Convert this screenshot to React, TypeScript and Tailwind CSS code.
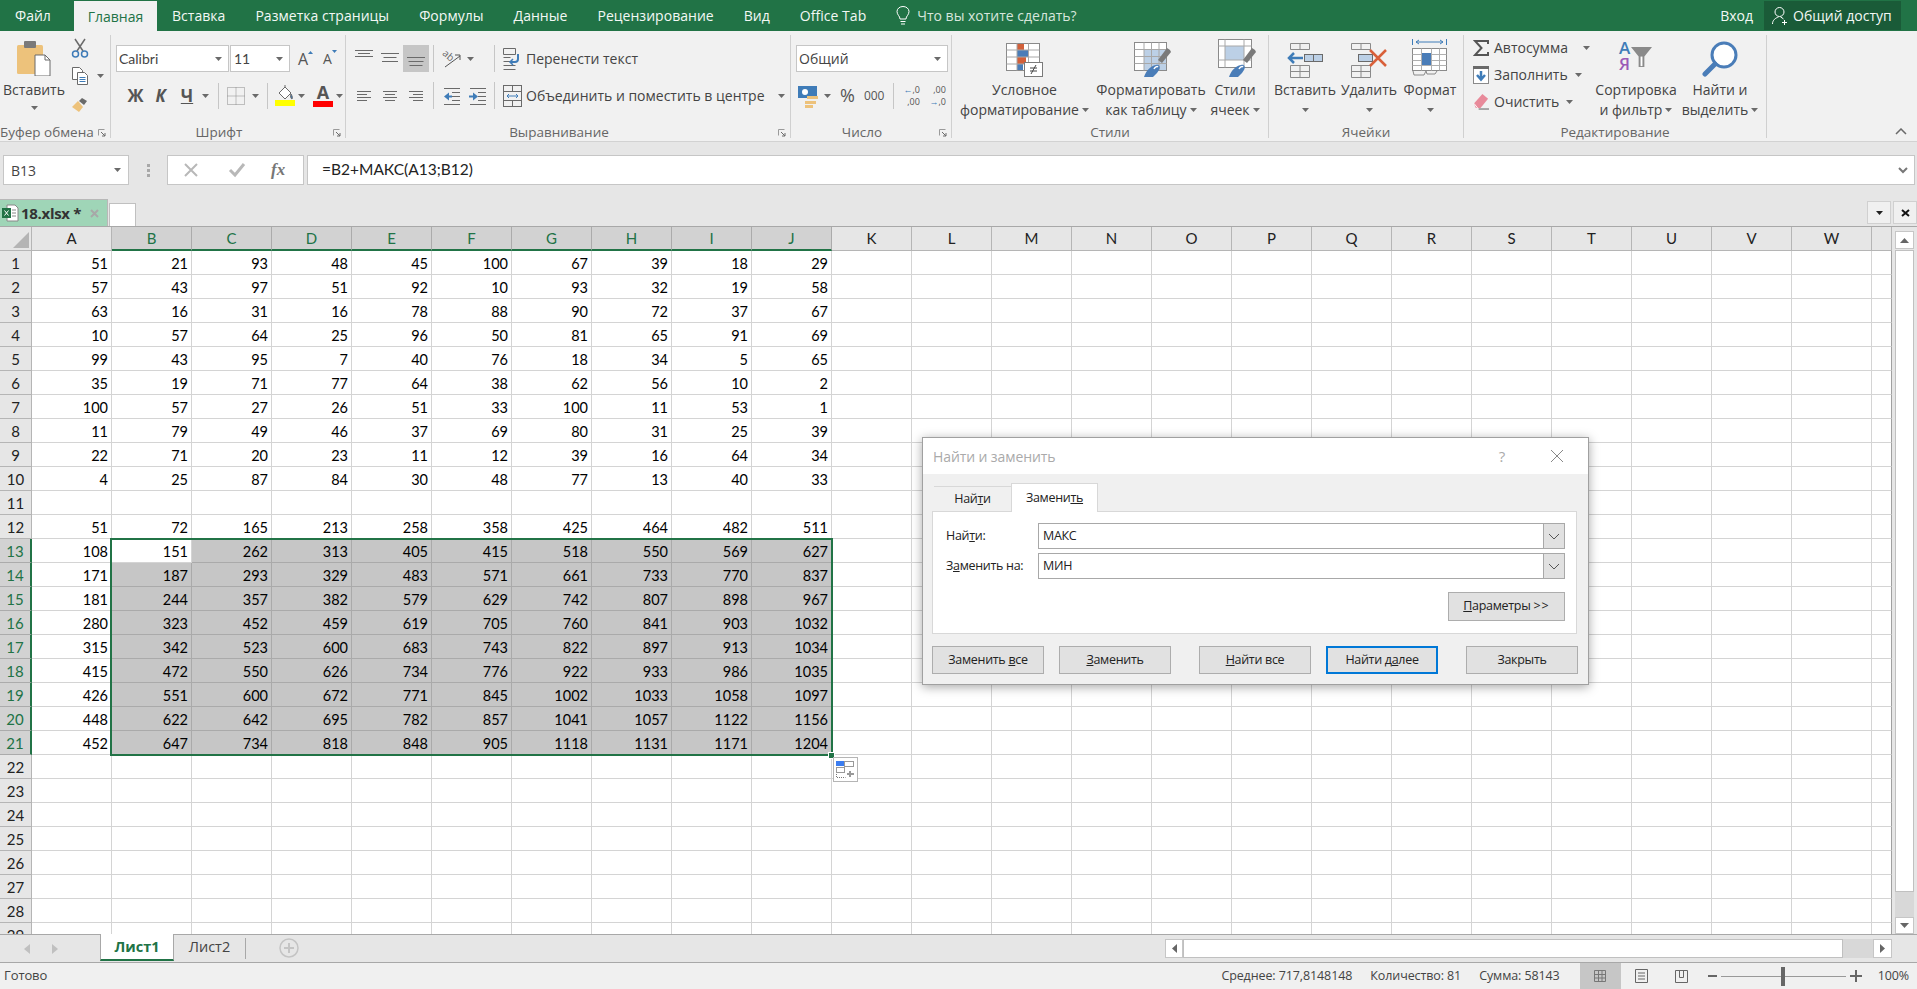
import React from "react";

const SEG = "font-['Open_Sans',sans-serif]";
const CAL = "font-['Lato',sans-serif]";

const data: (number | string)[][] = [
  [51,21,93,48,45,100,67,39,18,29],
  [57,43,97,51,92,10,93,32,19,58],
  [63,16,31,16,78,88,90,72,37,67],
  [10,57,64,25,96,50,81,65,91,69],
  [99,43,95,7,40,76,18,34,5,65],
  [35,19,71,77,64,38,62,56,10,2],
  [100,57,27,26,51,33,100,11,53,1],
  [11,79,49,46,37,69,80,31,25,39],
  [22,71,20,23,11,12,39,16,64,34],
  [4,25,87,84,30,48,77,13,40,33],
  [],
  [51,72,165,213,258,358,425,464,482,511],
  [108,151,262,313,405,415,518,550,569,627],
  [171,187,293,329,483,571,661,733,770,837],
  [181,244,357,382,579,629,742,807,898,967],
  [280,323,452,459,619,705,760,841,903,1032],
  [315,342,523,600,683,743,822,897,913,1034],
  [415,472,550,626,734,776,922,933,986,1035],
  [426,551,600,672,771,845,1002,1033,1058,1097],
  [448,622,642,695,782,857,1041,1057,1122,1156],
  [452,647,734,818,848,905,1118,1131,1171,1204],
];
const cols = "ABCDEFGHIJKLMNOPQRSTUVW".split("");

function Caret({ className = "" }: { className?: string }) {
  return <svg width="7" height="4" viewBox="0 0 7 4" className={"shrink-0 " + className}><path d="M0 0h7L3.5 4z" fill="#6a6a6a" /></svg>;
}
function Launcher() {
  return (
    <svg width="8" height="8" viewBox="0 0 8 8" className="shrink-0">
      <path d="M.5.5h6M.5.5v6" stroke="#9a9a9a" fill="none" />
      <path d="M3 3l4 4M7 4v3H4" stroke="#6a6a6a" fill="none" />
    </svg>
  );
}
function Lines({ kind }: { kind: "l" | "c" | "r" }) {
  const w = [14, 10, 14, 10];
  return (
    <svg width="16" height="14" viewBox="0 0 16 14">
      {w.map((v, i) => {
        const x = kind === "l" ? 1 : kind === "c" ? (16 - v) / 2 : 15 - v;
        return <path key={i} d={`M${x} ${2.5 + i * 3}h${v}`} stroke="#6a6a6a" />;
      })}
    </svg>
  );
}
function VLines({ step, widths }: { step: number; widths: number[] }) {
  return (
    <svg width="18" height={step * 2 + 2} viewBox={`0 0 18 ${step * 2 + 2}`} className="block">
      {widths.map((v, i) => <path key={i} d={`M${(18 - v) / 2} ${0.5 + i * step}h${v}`} stroke="#6a6a6a" />)}
    </svg>
  );
}
function Grp({ w, label, launcher, children }: { w: number; label: string; launcher?: boolean; children: React.ReactNode }) {
  return (
    <div style={{ width: w }} className="h-[103px] border-r border-[#d0d0d0] flex flex-col shrink-0">
      <div className="h-[91px]">{children}</div>
      <div className={"h-[12px] flex items-center relative " + (launcher ? "pr-[18px]" : "")}>
        <div className="flex-1 text-center text-[13.5px] leading-[13px] text-[#666] whitespace-nowrap">{label}</div>
        {launcher && <div className="absolute right-[4px] top-[3px]"><Launcher /></div>}
      </div>
    </div>
  );
}
function BigBtn({ w, l1, l2, icon }: { w: number; l1: string; l2?: string; icon: React.ReactNode }) {
  return (
    <div style={{ width: w }} className="flex flex-col items-center shrink-0">
      <div className="h-[42px] flex items-end justify-center">{icon}</div>
      <div className="mt-[3px] h-[20px] leading-[20px] text-[14px] text-[#444] whitespace-nowrap">{l1}</div>
      {l2 ? (
        <div className="h-[20px] leading-[20px] text-[14px] text-[#444] whitespace-nowrap flex items-center gap-[3px]">{l2}<Caret /></div>
      ) : (
        <div className="h-[20px] flex items-center"><Caret /></div>
      )}
    </div>
  );
}
function Brush() {
  return (
    <>
      <path d="M36 8l-3-2-9 12 4 3 9-11z" fill="#7a7a7a" />
      <path d="M10 35c2-6 6-11 12-12 3-1 5 2 3 5l-2 3 -4 4z" fill="#4a7db8" />
      <path d="M20 27c1-2 3-3 4-2" stroke="#fff" strokeWidth="1.500" fill="none" />
    </>
  );
}
function TableIcon() {
  return (
    <svg width="38" height="35" viewBox="0 0 38 35" className="ml-[4px]">
      <rect x=".5" y=".5" width="32" height="28" fill="#fff" stroke="#8a8a8a" />
      <rect x="10" y="8" width="22" height="20" fill="#bcd0e6" />
      <path d="M.5 7.500h32M.5 14.500h32M.5 21.500h32M10 .5v28M17.500 .5v28M25 .5v28" stroke="#a8a8a8" />
      <Brush />
    </svg>
  );
}
function CellStyleIcon() {
  return (
    <svg width="38" height="38" viewBox="0 0 38 38" className="ml-[4px]">
      <rect x=".5" y=".5" width="33" height="28" fill="#fff" stroke="#8a8a8a" />
      <rect x="7" y="7" width="19" height="14" fill="#bcd0e6" />
      <path d="M.5 7h33M.5 21h33M7 .5v28M26 .5v28" stroke="#a8a8a8" />
      <g transform="translate(1 3)"><Brush /></g>
    </svg>
  );
}
function DlgBtn({ w, active, children }: { w: number; active?: boolean; children: React.ReactNode }) {
  return (
    <div style={{ width: w }} className={"h-[28px] shrink-0 flex items-center justify-center bg-[#e1e1e1] " + (active ? "border-2 border-[#0078d7]" : "border border-[#adadad]")}>
      <span>{children}</span>
    </div>
  );
}
function SheetRow({ r }: { r: number }) {
  const row = data[r - 1] || [];
  const sel = r >= 13 && r <= 21;
  return (
    <div className="flex h-[24px] shrink-0">
      <div className={"w-[32px] shrink-0 h-full flex items-center justify-center pt-[2px] text-[15px] border-b border-r " + (sel ? "bg-[#d2d2d2] text-[#217346] border-b-[#ababab] border-r-[#217346] border-r-2" : "bg-[#e6e6e6] text-[#222] border-[#b5b5b5]")}>{r}</div>
      {cols.map((c, i) => {
        const inSel = sel && i >= 1 && i <= 9 && !(r === 13 && i === 1);
        return (
          <div key={c} className={"w-[80px] shrink-0 h-full flex items-center justify-end pr-[3px] pt-[3px] text-[14.5px] text-black border-r border-b " + (inSel ? "bg-[#c6c6c6] border-[#aaaaaa]" : "bg-white border-[#d4d4d4]")}>
            {row[i] ?? ""}
          </div>
        );
      })}
      <div className="w-[20px] shrink-0 h-full bg-white border-b border-r border-b-[#d4d4d4] border-r-[#a0a0a0]" />
    </div>
  );
}

export default function App() {
  const rows = Array.from({ length: 29 }, (_, i) => i + 1);
  return (
    <div className={"w-[1917px] h-[989px] overflow-hidden flex flex-col bg-[#e6e6e6] relative " + SEG}>
      {/* Title / tabs */}
      <div className="h-[31px] bg-[#217346] flex items-end text-[#f3f8f5] text-[14px] shrink-0">
        <div className="h-[31px] w-[74px] flex items-center pl-[15px]">Файл</div>
        <div className="h-[30px] w-[83px] flex items-center justify-center bg-[#f1f1f1] text-[#217346]">Главная</div>
        <div className="flex items-center h-[31px] gap-[30px] pl-[15px] tracking-[0.03px]">
          <span>Вставка</span><span>Разметка страницы</span><span>Формулы</span><span>Данные</span><span>Рецензирование</span><span>Вид</span><span>Office Tab</span>
        </div>
        <div className="flex items-center h-[31px] ml-[30px] gap-[7px] text-[#d7e6dd]">
          <svg width="14" height="20" viewBox="0 0 14 20" fill="none" stroke="#fff" strokeWidth="1"><path d="M4 13c0-3-3-4-3-7.500a6 5 0 0 1 12 0C13 9 10 10 10 13z" /><path d="M4.500 15.500h5M5 18h4" /></svg>
          <span>Что вы хотите сделать?</span>
        </div>
        <div className="flex-1" />
        <div className="h-[31px] flex items-center pr-[11px]">Вход</div>
        <div className="h-[29px] mb-[1px] w-[137px] mr-[16px] bg-[#1a5b38] flex items-center pl-[7px] gap-[3px]">
          <svg width="19" height="20" viewBox="0 0 18 20" fill="none" stroke="#fff"><circle cx="8" cy="6" r="4.500" /><path d="M1 18c0-4 3-6 6-7M9 11c1 .5 2 1 3 2M13 14v5M10.500 16.500h5" /></svg>
          <span>Общий доступ</span>
        </div>
      </div>

      {/* Ribbon */}
      <div className="h-[111px] bg-[#f1f1f1] border-b border-[#d2d2d2] flex items-start pt-[4px] text-[#444] text-[14px] shrink-0 relative">
        {/* Clipboard */}
        <Grp w={111} label="Буфер обмена" launcher>
          <div className="flex">
            <div className="w-[68px] flex flex-col items-center">
              <svg width="36" height="36" viewBox="0 0 36 36" className="mt-[5px]">
                <rect x="1" y="5" width="26" height="29" rx="1.500" fill="#edc27b" />
                <rect x="8" y="1" width="12" height="7" rx="1" fill="#7a7a7a" />
                <path d="M19 15h10l5 5v16H19z" fill="#fff" stroke="#6a6a6a" />
                <path d="M29 15v5h5" fill="none" stroke="#6a6a6a" />
              </svg>
              <div className="mt-[4px] leading-[20px] whitespace-nowrap">Вставить</div>
              <Caret className="mt-[6px]" />
            </div>
            <div className="pl-[3px] flex flex-col">
              <svg width="18" height="20" viewBox="0 0 18 20" className="mt-[3px]" fill="none"><path d="M4 1l8 12M14 1L6 13" stroke="#6a6a6a" strokeWidth="1.500" /><circle cx="4.500" cy="16" r="3" stroke="#3f7cb8" strokeWidth="1.500" /><circle cx="13.500" cy="16" r="3" stroke="#3f7cb8" strokeWidth="1.500" /></svg>
              <div className="flex items-center gap-[8px] mt-[9px]">
                <svg width="18" height="18" viewBox="0 0 18 18" fill="#fff" stroke="#6a6a6a"><path d="M1.500.5h7l3 3v9h-10z" /><path d="M6.500 5.500h7l3 3v9h-10z" /><path d="M8.500 10.500h6M8.500 12.500h6M8.500 14.500h6" stroke="#3f7cb8" /></svg>
                <Caret />
              </div>
              <svg width="18" height="16" viewBox="0 0 18 16" className="mt-[12px]"><path d="M1 10l6-6 5 6-4 5z" fill="#edc27b" /><path d="M8 4l3-3 5 3-3 4z" fill="#6a6a6a" /></svg>
            </div>
          </div>
        </Grp>

        {/* Font */}
        <Grp w={235} label="Шрифт" launcher>
          <div className="flex items-center pt-[10px] pl-[5px]">
            <div className="w-[113px] h-[27px] bg-white border border-[#c6c6c6] flex items-center justify-between pl-[2px] pr-[6px] text-[14px] text-[#444]"><span className={CAL}>Calibri</span><Caret /></div>
            <div className="w-[60px] h-[27px] ml-[1px] bg-white border border-[#c6c6c6] flex items-center justify-between pl-[3px] pr-[6px] text-[14px]"><span className={CAL}>11</span><Caret /></div>
            <div className="flex items-center gap-[9px] ml-[8px]">
              <div className="flex items-start w-[16px]"><span className="text-[16px] leading-[20px] text-[#555]">A</span><svg width="5" height="3" viewBox="0 0 5 3" className="mt-[2px] shrink-0"><path d="M0 3l2.500-3L5 3z" fill="#3f7cb8" /></svg></div>
              <div className="flex items-start w-[16px]"><span className="text-[14px] leading-[20px] text-[#555] mt-[1px]">A</span><svg width="5" height="3" viewBox="0 0 5 3" className="mt-[2px] shrink-0"><path d="M0 0l2.500 3L5 0z" fill="#3f7cb8" /></svg></div>
            </div>
          </div>
          <div className="flex items-center mt-[10px] pl-[12px] h-[27px]">
            <span className="font-bold text-[17px] w-[25px] text-center text-[#555]">Ж</span>
            <span className="font-bold italic text-[17px] w-[25px] text-center text-[#555]">К</span>
            <span className="font-bold underline text-[17px] w-[28px] text-center text-[#555]">Ч</span>
            <Caret className="ml-[1px]" />
            <div className="w-px h-[26px] bg-[#c6c6c6] ml-[9px]" />
            <svg width="18" height="18" viewBox="0 0 18 18" className="ml-[8px]" fill="none" stroke="#8a8a8a" strokeDasharray="1 1"><path d="M.5.500h17v17H.5zM.5 9h17M9 .5v17" /></svg>
            <Caret className="ml-[7px]" />
            <div className="w-px h-[26px] bg-[#c6c6c6] ml-[8px]" />
            <div className="ml-[7px] w-[20px] flex flex-col items-center">
              <svg width="18" height="15" viewBox="0 0 18 15"><path d="M3 8L9 2l6 6-6 6z" fill="#fff" stroke="#6a6a6a" /><path d="M9 2V0M15 9c1 2 2 3 1 5-1 0-2-3-1-5z" fill="#3f7cb8" stroke="#6a6a6a" /></svg>
              <div className="h-[6px] w-[20px] bg-[#ffff00]" />
            </div>
            <Caret className="ml-[3px]" />
            <div className="ml-[8px] w-[20px] flex flex-col items-center">
              <span className="font-bold text-[18px] leading-[17px] text-[#555]">A</span>
              <div className="h-[6px] w-[20px] bg-[#ff0000]" />
            </div>
            <Caret className="ml-[3px]" />
          </div>
        </Grp>

        {/* Alignment */}
        <Grp w={445} label="Выравнивание" launcher>
          <div className="flex pl-[5px]">
            <div className="w-[82px] pt-[10px]">
              <div className="flex h-[27px] items-start">
                <div className="w-[26px] flex justify-center pt-[5px]"><VLines step={3} widths={[18, 12, 18]} /></div>
                <div className="w-[26px] flex justify-center pt-[8px]"><VLines step={4} widths={[18, 13, 16]} /></div>
                <div className="w-[26px] h-[27px] bg-[#c6c6c6] flex justify-center pt-[12px]"><VLines step={4} widths={[18, 15, 13]} /></div>
              </div>
              <div className="flex h-[27px] items-center mt-[10px]">
                <div className="w-[26px] flex justify-center"><Lines kind="l" /></div>
                <div className="w-[26px] flex justify-center"><Lines kind="c" /></div>
                <div className="w-[26px] flex justify-center"><Lines kind="r" /></div>
              </div>
            </div>
            <div className="w-[61px] pt-[10px]">
              <div className="h-[27px] flex items-center border-l border-[#c6c6c6] pl-[8px] gap-[5px]">
                <div className="w-[20px] h-[20px] relative overflow-visible">
                  <span className="absolute left-[1px] top-[0px] text-[10px] leading-[12px] text-[#666] rotate-[40deg]">ab</span>
                  <svg width="20" height="20" viewBox="0 0 20 20" fill="none"><path d="M3 18L18 7M13 6h5v5" stroke="#555" /></svg>
                </div>
                <Caret />
              </div>
              <div className="h-[27px] flex items-center border-l border-[#c6c6c6] pl-[9px] gap-[8px] mt-[10px]">
                <svg width="18" height="18" viewBox="0 0 18 18"><path d="M1 1.500h16M9 5.500h8M9 9.500h8M9 13.500h8M1 17.500h16" stroke="#6a6a6a" /><path d="M1 9.500l5-4v8z" fill="#3f7cb8" /><path d="M4 9.500h5" stroke="#3f7cb8" strokeWidth="2" /></svg>
                <svg width="18" height="18" viewBox="0 0 18 18"><path d="M1 1.500h16M9 5.500h8M9 9.500h8M9 13.500h8M1 17.500h16" stroke="#6a6a6a" /><path d="M9 9.500l-5-4v8z" fill="#3f7cb8" /><path d="M0 9.500h5" stroke="#3f7cb8" strokeWidth="2" /></svg>
              </div>
            </div>
            <div className="flex-1 pt-[10px]">
              <div className="h-[27px] flex items-center border-l border-[#c6c6c6] pl-[8px] gap-[4px] whitespace-nowrap">
                <svg width="19" height="22" viewBox="0 0 19 22" fill="none"><path d="M.5.500h12v6H.5zM.5 9.500h7M.5 13.500h7M.5 17.500h12M.5 21.500h12" stroke="#6a6a6a" /><path d="M15 6v5q0 3-3 3H8" stroke="#3f7cb8" strokeWidth="2" /><path d="M10 11l-3 3 3 3" stroke="#3f7cb8" strokeWidth="1.500" /></svg>
                <span>Перенести текст</span>
              </div>
              <div className="h-[27px] flex items-center border-l border-[#c6c6c6] pl-[8px] gap-[4px] mt-[10px] whitespace-nowrap">
                <svg width="19" height="22" viewBox="0 0 19 22" fill="none"><rect x=".5" y=".5" width="18" height="21" stroke="#6a6a6a" /><path d="M.5 6.500h18M.5 15.500h18M9.500.5v6M9.500 15.500v6" stroke="#6a6a6a" /><path d="M4 11h11M6 9l-2 2 2 2M13 9l2 2-2 2" stroke="#3f7cb8" /></svg>
                <span>Объединить и поместить в центре</span>
                <Caret className="ml-[9px]" />
              </div>
            </div>
          </div>
        </Grp>

        {/* Number */}
        <Grp w={161} label="Число" launcher>
          <div className="pt-[10px] pl-[5px]">
            <div className="w-[152px] h-[27px] bg-white border border-[#c6c6c6] flex items-center justify-between pl-[2px] pr-[6px] text-[14px]"><span>Общий</span><Caret /></div>
            <div className="flex items-center mt-[10px] h-[27px] pl-[2px]">
              <svg width="21" height="24" viewBox="0 0 21 24"><rect x="0" y="2" width="19" height="12" fill="#3f7cb8" /><circle cx="7" cy="8" r="3" fill="#fff" /><rect x="9" y="12" width="11" height="3" fill="#edc27b" /><rect x="7" y="17" width="11" height="3" fill="#edc27b" /><rect x="7" y="21" width="8" height="3" fill="#edc27b" /></svg>
              <Caret className="ml-[5px]" />
              <span className="ml-[9px] text-[18px] text-[#555]">%</span>
              <span className="ml-[9px] text-[12px] text-[#555] w-[24px]">000</span>
              <div className="w-px h-[26px] bg-[#c6c6c6] ml-[5px]" />
              <div className="ml-[7px] text-[9px] leading-[12px] w-[19px] text-[#555] text-right whitespace-nowrap"><div><span className="text-[#3f7cb8]">←</span>,0</div><div>,00</div></div>
              <div className="ml-[7px] text-[9px] leading-[12px] w-[19px] text-[#555] text-right whitespace-nowrap"><div>,00</div><div><span className="text-[#3f7cb8]">→</span>,0</div></div>
            </div>
          </div>
        </Grp>

        {/* Styles */}
        <Grp w={317} label="Стили">
          <div className="flex pl-[6px]">
            <BigBtn w={133} l1="Условное" l2="форматирование" icon={
              <svg width="38" height="34" viewBox="0 0 38 34">
                <rect x=".5" y=".5" width="33" height="27" fill="#fff" stroke="#8a8a8a" />
                <rect x="11" y="1" width="7" height="6" fill="#d2603a" /><rect x="11" y="7" width="12" height="7" fill="#4a7db8" /><rect x="11" y="14" width="9" height="7" fill="#d2603a" /><rect x="11" y="21" width="6" height="6" fill="#4a7db8" />
                <path d="M.5 7h33M.5 14h33M.5 21h33M11 .5v27M22.500.5v27" stroke="#a8a8a8" />
                <rect x="18.500" y="19.500" width="18" height="14" fill="#fff" stroke="#7a7a7a" />
                <path d="M24 25h7M24 28h7M30 22l-5 9" stroke="#444" fill="none" />
              </svg>} />
            <BigBtn w={120} l1="Форматировать" l2="как таблицу" icon={<TableIcon />} />
            <BigBtn w={48} l1="Стили" l2="ячеек" icon={<CellStyleIcon />} />
          </div>
        </Grp>

        {/* Cells */}
        <Grp w={195} label="Ячейки">
          <div className="flex pl-[4px]">
            <BigBtn w={64} l1="Вставить" icon={
              <svg width="36" height="35" viewBox="0 0 36 35" fill="none" className="-mb-px"><path d="M3.500.5h19v6h-19zM13 .5v6M3.500 22.500h19v12h-19zM13 22.500v12M3.500 28.500h19" stroke="#8a8a8a" /><rect x="17.500" y="11.500" width="18" height="7" fill="#bcd0e6" stroke="#6a6a6a" /><path d="M26.500 11.500v7" stroke="#6a6a6a" /><path d="M16 15H2M7 10l-5 5 5 5" stroke="#3f7cb8" strokeWidth="2.500" /></svg>} />
            <BigBtn w={64} l1="Удалить" icon={
              <svg width="36" height="35" viewBox="0 0 36 35" fill="none" className="-mb-px"><path d="M.5.500h19v6H.5zM10 .5v6M.5 22.500h19v12H.5zM10 22.500v12M.5 28.500h19" stroke="#8a8a8a" /><rect x="7.500" y="11.500" width="14" height="7" fill="#bcd0e6" stroke="#6a6a6a" /><path d="M19 7l16 16M35 7L19 23" stroke="#d9603a" strokeWidth="2.500" /></svg>} />
            <BigBtn w={58} l1="Формат" icon={
              <svg width="36" height="37" viewBox="0 0 36 37" fill="none" className="mb-[1px]"><path d="M.5 0v6M34.500 0v6M4 3h27M4 3l3-2M4 3l3 2M31 3l-3-2M31 3l-3 2" stroke="#3f7cb8" /><rect x=".5" y="9.500" width="34" height="22" fill="#fff" stroke="#8a8a8a" /><path d="M.5 15.500h34M.5 21.500h34M.5 26.500h34M9.500 9.500v22M19.500 9.500v22M27.500 9.500v22" stroke="#b0b0b0" /><rect x="10" y="14" width="9" height="12" fill="#4a7db8" /><path d="M1 32l1 4h10l2-4M14 32l1 3h8l2-3" stroke="#8a8a8a" /></svg>} />
          </div>
        </Grp>

        {/* Editing */}
        <Grp w={303} label="Редактирование">
          <div className="flex">
            <div className="w-[116px] pl-[9px] -mt-[1px] whitespace-nowrap">
              <div className="h-[27px] flex items-center gap-[5px]">
                <svg width="16" height="16" viewBox="0 0 16 16" fill="none" className="shrink-0"><path d="M15 4V1H2l6.500 7L2 15h13v-3" stroke="#555" strokeWidth="2" /></svg>
                <span>Автосумма</span><Caret className="ml-[10px]" />
              </div>
              <div className="h-[27px] flex items-center gap-[5px]">
                <svg width="16" height="18" viewBox="0 0 16 18" fill="none" className="shrink-0"><rect x=".5" y=".5" width="15" height="17" fill="#fff" stroke="#8a8a8a" /><rect x="0" y="0" width="16" height="3" fill="#6a6a6a" /><path d="M8 5v8M4 9l4 4.500L12 9" stroke="#3f7cb8" strokeWidth="2.500" /></svg>
                <span>Заполнить</span><Caret className="ml-[2px]" />
              </div>
              <div className="h-[27px] flex items-center gap-[5px]">
                <svg width="16" height="17" viewBox="0 0 17 18" fill="none" className="shrink-0"><path d="M1 11l9-10 6 5-8 10H3z" fill="#e88a9a" /><path d="M1 11l4 5" stroke="#fff" /><path d="M6 17h11" stroke="#555" /></svg>
                <span>Очистить</span><Caret className="ml-[2px]" />
              </div>
            </div>
            <BigBtn w={112} l1="Сортировка" l2="и фильтр" icon={
              <div className="flex items-start h-[32px] mb-[5px]">
                <div className="flex flex-col text-[17px] leading-[16px] font-semibold">
                  <span className="text-[#3f7cb8]">А</span>
                  <span className="text-[#9a5ab8]">Я</span>
                </div>
                <svg width="23" height="21" viewBox="0 0 24 22" className="mt-[7px] shrink-0"><path d="M1 0h22l-8 10v11H9V10z" fill="#8a8a8a" /><path d="M11 10v10h2V10z" fill="#fff" /></svg>
              </div>} />
            <BigBtn w={56} l1="Найти и" l2="выделить" icon={
              <svg width="36" height="36" viewBox="0 0 36 36" fill="none"><circle cx="22" cy="14" r="12" stroke="#4a7db8" strokeWidth="3" fill="#fff" /><path d="M13 23L3 33" stroke="#4a7db8" strokeWidth="5" strokeLinecap="round" /></svg>} />
          </div>
        </Grp>
        <div className="flex-1" />
        <svg width="12" height="7" viewBox="0 0 12 7" className="absolute right-[10px] top-[97px]" fill="none" stroke="#6a6a6a" strokeWidth="1.500"><path d="M1 6l5-5 5 5" /></svg>
      </div>

      {/* Formula bar */}
      <div className="h-[58px] shrink-0 flex items-start pt-[13px] pl-[3px] pr-[2px] bg-[#e6e6e6]">
        <div className="w-[126px] h-[30px] bg-white border border-[#c6c6c6] flex items-center justify-between pl-[7px] pr-[7px] text-[14px] text-[#444]"><span>B13</span><Caret /></div>
        <div className="w-[38px] flex justify-center pt-[9px]"><div className="w-[3px] h-[13px] border-l-[3px] border-dotted border-[#a8a8a8]" /></div>
        <div className="w-[137px] h-[30px] bg-white border border-[#c6c6c6] flex items-center pl-[15px]">
          <svg width="16" height="16" viewBox="0 0 16 16" fill="none" stroke="#b8b8b8" strokeWidth="2"><path d="M2 2l12 12M14 2L2 14" /></svg>
          <svg width="18" height="16" viewBox="0 0 18 16" fill="none" stroke="#b8b8b8" strokeWidth="3" className="ml-[29px]"><path d="M2 8l5 5 9-11" /></svg>
          <span className="ml-[25px] font-['Liberation_Serif',serif] italic font-bold text-[17px] text-[#777]">fx</span>
        </div>
        <div className="w-[3px]" />
        <div className={"flex-1 h-[30px] bg-white border border-[#c6c6c6] flex items-center justify-between pl-[14px] pr-[6px] text-[15.5px] text-[#222] " + CAL}>
          <span>=B2+МАКС(A13;B12)</span>
          <svg width="10" height="7" viewBox="0 0 10 7" fill="none" stroke="#777" strokeWidth="2"><path d="M1 1l4 4 4-4" /></svg>
        </div>
      </div>

      {/* Office tab strip */}
      <div className="h-[28px] shrink-0 flex items-end bg-[#e6e6e6] border-b border-[#a8a8a8] relative -mt-[1px]">
        <div className="w-[108px] h-[27px] bg-[#9fd5b7] border-t border-r border-[#b8b8b8] flex items-center pl-[2px] gap-[2px]">
          <svg width="17" height="18" viewBox="0 0 17 18" className="shrink-0"><path d="M5 1h8l3 3v13H5z" fill="#fff" stroke="#888" /><rect x="0" y="4" width="9" height="10" fill="#217346" /><path d="M2.500 6.500l4 5M6.500 6.500l-4 5" stroke="#fff" /><path d="M10 6h4M10 9h4M10 12h4" stroke="#888" /></svg>
          <span className="font-bold text-[15px] text-[#333] tracking-[-0.3px] whitespace-nowrap">18.xlsx *</span>
          <svg width="9" height="9" viewBox="0 0 9 9" className="ml-[7px] shrink-0" fill="none" stroke="#a8a8a8" strokeWidth="2"><path d="M1 1l7 7M8 1L1 8" /></svg>
        </div>
        <div className="w-[27px] h-[23px] ml-[1px] bg-white border border-[#c0c0c0] border-b-0" />
        <div className="flex-1" />
        <div className="w-[24px] h-[23px] mb-[2px] mr-[2px] bg-[#f0f0f0] border border-[#d0d0d0] flex items-center justify-center"><svg width="7" height="4" viewBox="0 0 7 4"><path d="M0 0h7L3.500 4z" fill="#222" /></svg></div>
        <div className="w-[24px] h-[23px] mb-[2px] bg-[#f0f0f0] border border-[#d0d0d0] flex items-center justify-center"><svg width="9" height="8" viewBox="0 0 9 8" fill="none" stroke="#111" strokeWidth="2"><path d="M1 1l7 6M8 1L1 7" /></svg></div>
      </div>

      {/* Sheet */}
      <div className="flex-1 min-h-0 flex relative">
        <div className="w-[1892px] shrink-0 overflow-hidden flex flex-col bg-white">
          <div className={"flex h-[24px] shrink-0 " + CAL}>
            <div className="w-[32px] shrink-0 bg-[#e6e6e6] border-r border-b border-[#b5b5b5] flex items-end justify-end p-[2px]">
              <svg width="16" height="16" viewBox="0 0 16 16"><path d="M16 0v16H0z" fill="#b4b4b4" /></svg>
            </div>
            {cols.map((c, i) => {
              const s = i >= 1 && i <= 9;
              return (
                <div key={c} className={"w-[80px] shrink-0 flex items-center justify-center text-[15px] border-r " + (s ? "bg-[#d2d2d2] text-[#217346] border-[#ababab] border-b-2 border-b-[#217346]" : "bg-[#e6e6e6] text-[#222] border-[#b5b5b5] border-b")}>{c}</div>
              );
            })}
            <div className="w-[20px] bg-[#e6e6e6] border-b border-r border-[#b5b5b5]" />
          </div>
          <div className={"flex-1 min-h-0 overflow-hidden " + CAL}>
            {rows.map((r) => <SheetRow key={r} r={r} />)}
          </div>
        </div>
        {/* vertical scrollbar */}
        <div className="w-[25px] shrink-0 bg-[#e6e6e6] flex flex-col pl-[3px] pr-[3px] pt-[4px]">
          <div className="h-[18px] bg-white border border-[#c6c6c6] flex items-center justify-center shrink-0"><svg width="9" height="5" viewBox="0 0 9 5"><path d="M4.500 0L9 5H0z" fill="#666" /></svg></div>
          <div className="h-[642px] mt-[1px] bg-white border border-[#c0c0c0] shrink-0" />
          <div className="h-[25px] bg-[#d8d8d8] shrink-0" />
          <div className="h-[17px] bg-white border border-[#c6c6c6] flex items-center justify-center shrink-0"><svg width="9" height="5" viewBox="0 0 9 5"><path d="M4.500 5L9 0H0z" fill="#666" /></svg></div>
        </div>
        {/* selection overlay */}
        <div className="absolute left-[110px] top-[311px] w-[723px] h-[218px] border-2 border-[#217346] pointer-events-none" />
        <div className="absolute left-[828px] top-[525px] w-[7px] h-[7px] bg-[#217346] border border-white pointer-events-none" />
        <div className="absolute left-[833px] top-[530px] w-[25px] h-[25px] bg-white border border-[#b5b5b5] flex items-center justify-center">
          <svg width="19" height="17" viewBox="0 0 19 17" fill="none"><rect x="0" y="0" width="8" height="5" fill="#3b7df0" /><rect x="8.500" y=".5" width="9" height="5" stroke="#999" /><rect x=".5" y="6.500" width="8" height="5" stroke="#999" /><path d="M.5 13v3.500h9" stroke="#777" strokeDasharray="1 1" /><path d="M14 10v6M11 13h7" stroke="#999" strokeWidth="2" /></svg>
        </div>
      </div>

      {/* Sheet tabs */}
      <div className="h-[29px] shrink-0 bg-[#e6e6e6] border-t border-b border-[#a8a8a8] flex items-start text-[14.5px]">
        <div className="w-[100px] h-full flex items-center pl-[24px] gap-[22px]">
          <svg width="6" height="10" viewBox="0 0 6 10"><path d="M6 0v10L0 5z" fill="#c0c0c0" /></svg>
          <svg width="6" height="10" viewBox="0 0 6 10"><path d="M0 0v10l6-5z" fill="#c0c0c0" /></svg>
        </div>
        <div className="w-[74px] h-[27px] -mt-px bg-white border-x border-[#a8a8a8] border-b-2 border-b-[#217346] flex items-center justify-center font-bold text-[#217346]">Лист1</div>
        <div className="w-[71px] h-[24px] flex items-center justify-center text-[#444]">Лист2</div>
        <div className="w-px h-[21px] mt-[3px] bg-[#a8a8a8]" />
        <svg width="20" height="20" viewBox="0 0 20 20" className="ml-[33px] mt-[3px]" fill="none" stroke="#c4c4c4" strokeWidth="1.500"><circle cx="10" cy="10" r="9" /><path d="M5 10h10M10 5v10" strokeWidth="2" /></svg>
        <div className="flex-1" />
        <div className="w-[727px] mr-[25px] mt-[4px] h-[19px] bg-[#d8d8d8] flex">
          <div className="w-[18px] h-full bg-white border border-[#c6c6c6] flex items-center justify-center"><svg width="5" height="9" viewBox="0 0 5 9"><path d="M5 0v9L0 4.500z" fill="#666" /></svg></div>
          <div className="w-[660px] h-full bg-white border border-[#c0c0c0]" />
          <div className="flex-1" />
          <div className="w-[19px] h-full bg-white border border-[#c6c6c6] flex items-center justify-center"><svg width="5" height="9" viewBox="0 0 5 9"><path d="M0 0v9l5-4.500z" fill="#666" /></svg></div>
        </div>
      </div>

      {/* Status bar */}
      <div className="h-[26px] shrink-0 bg-[#f0f0f0] flex items-center text-[12.5px] text-[#444] tracking-[-0.1px]">
        <span className="pl-[4px] text-[13px]">Готово</span>
        <div className="flex-1" />
        <span>Среднее: 717,8148148</span>
        <span className="ml-[18px]">Количество: 81</span>
        <span className="ml-[18px]">Сумма: 58143</span>
        <div className="ml-[20px] w-[41px] h-full bg-[#c6c6c6] flex items-center justify-center">
          <svg width="12" height="12" viewBox="0 0 12 12" fill="none" stroke="#777"><path d="M.5.500h11v11H.5zM4.500.5v11M8 .5v11M.5 4.500h11M.5 8h11" /></svg>
        </div>
        <div className="w-[42px] flex justify-center">
          <svg width="13" height="14" viewBox="0 0 13 14" fill="none" stroke="#666"><path d="M.5.500h12v13H.5zM3 4h7M3 7h7M3 10h7" /></svg>
        </div>
        <div className="w-[38px] flex justify-center">
          <svg width="13" height="13" viewBox="0 0 13 13" fill="none" stroke="#666"><path d="M.5.500h12v12H.5zM4.500.5v7h4v-7" /></svg>
        </div>
        <div className="w-[9px] h-[2px] bg-[#666] ml-[7px]" />
        <div className="w-[125px] h-px bg-[#999] ml-[4px] relative">
          <div className="absolute left-[60px] -top-[9px] w-[4px] h-[19px] bg-[#666]" />
        </div>
        <svg width="12" height="12" viewBox="0 0 12 12" className="ml-[4px]"><path d="M6 0v12M0 6h12" stroke="#666" strokeWidth="2" /></svg>
        <span className="ml-[16px] mr-[8px]">100%</span>
      </div>

      {/* Dialog */}
      <div className="absolute left-[922px] top-[437px] w-[667px] h-[248px] bg-[#f0f0f0] border border-[#a0a0a0] shadow-[0_2px_10px_rgba(0,0,0,0.35)] flex flex-col text-[12.5px] tracking-[-0.3px] text-[#222]">
        <div className="h-[36px] bg-white shrink-0 flex items-center pl-[10px] text-[#aaa] text-[14px] tracking-[-0.1px]">
          <span>Найти и заменить</span>
          <div className="flex-1" />
          <span className="text-[15px] mr-[45px]">?</span>
          <svg width="14" height="14" viewBox="0 0 14 14" fill="none" stroke="#888" className="mr-[24px]"><path d="M1 1l12 12M13 1L1 13" /></svg>
        </div>
        <div className="flex flex-col pl-[9px] pr-[11px] pt-[9px] flex-1">
          <div className="flex items-end h-[28px] pl-[2px]">
            <div className="w-[77px] h-[25px] border-t border-[#d8d8d8] flex items-center justify-center"><span>Най<u>т</u>и</span></div>
            <div className="w-[87px] h-[29px] bg-white border border-b-0 border-[#d8d8d8] flex items-center justify-center -mb-px z-10"><span>Замени<u>ть</u></span></div>
          </div>
          <div className="h-[123px] bg-white border border-[#d8d8d8] flex flex-col pl-[13px] pr-[11px] pt-[11px]">
            <div className="flex items-center h-[26px]">
              <span className="w-[92px] shrink-0">Най<u>т</u>и:</span>
              <div className="flex-1 h-full bg-white border border-[#a8a8a8] flex items-center pl-[4px] justify-between"><span>МАКС</span>
                <div className="w-[21px] h-full bg-[#e1e1e1] border-l border-[#a8a8a8] flex items-center justify-center"><svg width="12" height="7" viewBox="0 0 12 7" fill="none" stroke="#555"><path d="M1 1l5 5 5-5" /></svg></div>
              </div>
            </div>
            <div className="flex items-center h-[26px] mt-[4px]">
              <span className="w-[92px] shrink-0">З<u>а</u>менить на:</span>
              <div className="flex-1 h-full bg-white border border-[#a8a8a8] flex items-center pl-[4px] justify-between"><span>МИН</span>
                <div className="w-[21px] h-full bg-[#e1e1e1] border-l border-[#a8a8a8] flex items-center justify-center"><svg width="12" height="7" viewBox="0 0 12 7" fill="none" stroke="#555"><path d="M1 1l5 5 5-5" /></svg></div>
              </div>
            </div>
            <div className="flex justify-end mt-[13px]">
              <div className="w-[117px] h-[29px] bg-[#e1e1e1] border border-[#adadad] flex items-center justify-center"><span><u>П</u>араметры <span className="tracking-[1px]">&gt;&gt;</span></span></div>
            </div>
          </div>
          <div className="flex mt-[12px]">
            <DlgBtn w={112}>Заменить <u>в</u>се</DlgBtn>
            <div className="w-[15px] shrink-0" />
            <DlgBtn w={112}><u>З</u>аменить</DlgBtn>
            <div className="w-[28px] shrink-0" />
            <DlgBtn w={112}><u>Н</u>айти все</DlgBtn>
            <div className="w-[15px] shrink-0" />
            <DlgBtn w={112} active>Найти д<u>а</u>лее</DlgBtn>
            <div className="w-[28px] shrink-0" />
            <DlgBtn w={112}>Закрыть</DlgBtn>
          </div>
        </div>
      </div>
    </div>
  );
}
